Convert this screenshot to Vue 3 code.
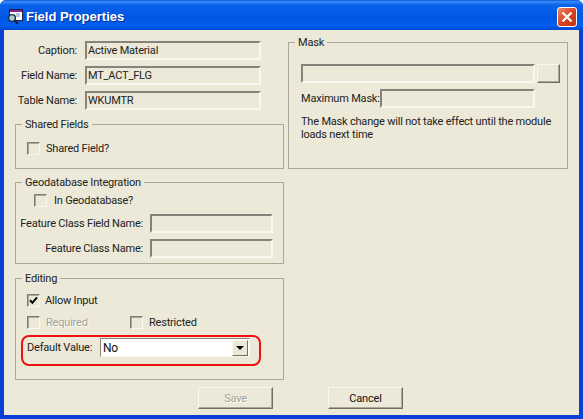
<template>
  <div class="window">
    <div class="titlebar">
      <svg class="app-icon" width="16" height="16" viewBox="0 0 16 16">
        <rect x="2.5" y="0.5" width="13" height="11" fill="#fff" stroke="#20204a" />
        <rect x="3" y="1" width="12" height="2" fill="#8a1f8f" />
        <path d="M9 5h4M9 7h4" stroke="#7a86c0" />
        <circle cx="5" cy="9" r="3.4" fill="#a9cfd6" stroke="#16324a" stroke-width="1.4" />
        <path d="M7.5 11.5L11 15" stroke="#14233a" stroke-width="2" />
      </svg>
      <span class="title">Field Properties</span>
      <button class="close">
        <svg width="12" height="12" viewBox="0 0 12 12">
          <path d="M1.5 1.5L10.5 10.5M10.5 1.5L1.5 10.5" stroke="#fff" stroke-width="2.4" />
        </svg>
      </button>
    </div>

    <div class="body">
      <div class="columns">
        <div class="left">
          <div class="info-rows">
            <div v-for="row in infoRows" :key="row.label" class="info-row">
              <label>{{ row.label }}</label>
              <div class="sunken">{{ row.value }}</div>
            </div>
          </div>

          <div class="group shared">
            <div class="legend">Shared Fields</div>
            <div class="check-row">
              <span class="check"></span>
              <span class="gap6">Shared Field?</span>
            </div>
          </div>

          <div class="group geo">
            <div class="legend">Geodatabase Integration</div>
            <div class="check-row indent">
              <span class="check"></span>
              <span class="gap7">In Geodatabase?</span>
            </div>
            <div class="feature-row first">
              <label>Feature Class Field Name:</label>
              <div class="sunken"></div>
            </div>
            <div class="feature-row">
              <label>Feature Class Name:</label>
              <div class="sunken"></div>
            </div>
          </div>

          <div class="group editing">
            <div class="legend">Editing</div>
            <div class="check-row">
              <span class="check">
                <svg width="9" height="9" viewBox="0 0 9 9">
                  <path d="M1 4.2L3.4 6.8L8 1.4" fill="none" stroke="#000" stroke-width="2" />
                </svg>
              </span>
              <span class="gap5">Allow Input</span>
            </div>
            <div class="check-row pair">
              <div class="check-item required">
                <span class="check"></span>
                <span class="gap6 muted">Required</span>
              </div>
              <div class="check-item">
                <span class="check"></span>
                <span class="gap6">Restricted</span>
              </div>
            </div>
            <div class="default-row">
              <label>Default Value:</label>
              <div class="combo">
                <span class="combo-value">No</span>
                <span class="combo-btn"><i></i></span>
              </div>
            </div>
          </div>
        </div>

        <div class="group mask">
          <div class="legend">Mask</div>
          <div class="mask-row">
            <div class="sunken mask-input"></div>
            <button class="raised browse"></button>
          </div>
          <div class="max-row">
            <label>Maximum Mask:</label>
            <div class="sunken"></div>
          </div>
          <p>The Mask change will not take effect until the module loads next time</p>
        </div>
      </div>

      <div class="footer">
        <button class="raised action muted">Save</button>
        <button class="raised action">Cancel</button>
      </div>
    </div>
  </div>
</template>

<script setup>
const infoRows = [
  { label: "Caption:", value: "Active Material" },
  { label: "Field Name:", value: "MT_ACT_FLG" },
  { label: "Table Name:", value: "WKUMTR" },
];
</script>

<style>
html,
body {
  margin: 0;
  background: #fff;
  overflow: hidden;
}
</style>

<style scoped>
.window {
  width: 583px;
  height: 419px;
  box-sizing: border-box;
  display: flex;
  flex-direction: column;
  background: #0a3fd8;
  border-radius: 6px 6px 0 0;
  padding: 0 4px 4px;
  font-family: Roboto, "Liberation Sans", Arial, sans-serif;
  font-size: 11px;
  letter-spacing: -0.2px;
  color: #222;
}

.titlebar {
  height: 30px;
  flex: none;
  margin: 0 -4px;
  padding: 0 6px 0 7px;
  display: flex;
  align-items: center;
  border-radius: 6px 6px 0 0;
  background: linear-gradient(180deg, #0a56d8 0, #3a8cf6 6%, #0a62ea 16%, #0056e4 60%, #0260ee 85%, #0148d0 100%);
}

.app-icon {
  margin-top: 3px;
}

.title {
  margin-left: 3px;
  margin-top: 3px;
  color: #fff;
  font-family: "Liberation Sans", Arial, sans-serif;
  font-size: 13px;
  font-weight: bold;
  letter-spacing: 0;
  text-shadow: 1px 1px 0 #0a2f9a;
}

.close {
  margin-left: auto;
  margin-top: 4px;
  width: 20px;
  height: 20px;
  padding: 0;
  display: grid;
  place-items: center;
  border: 1px solid #fff;
  border-radius: 3px;
  background: linear-gradient(135deg, #ec8a6c, #d6401c 55%, #c2360f);
}

.body {
  flex: 1;
  background: #ece9d8;
  padding: 11px 11px 0;
}

.columns {
  display: flex;
  gap: 4px;
  align-items: flex-start;
}

.left {
  width: 269px;
  display: flex;
  flex-direction: column;
}

label {
  white-space: nowrap;
}

.sunken {
  box-sizing: border-box;
  height: 19px;
  border: 2px solid;
  border-color: #86847a #f8f7f0 #f8f7f0 #86847a;
  background: #ece9d8;
  line-height: 16px;
  padding-left: 1px;
}

.info-rows {
  display: flex;
  flex-direction: column;
  gap: 6px;
}

.info-row {
  display: flex;
  align-items: center;
}

.info-row label {
  width: 62px;
  margin-right: 8px;
  text-align: right;
}

.info-row .sunken {
  width: 176px;
}

.group {
  position: relative;
  box-sizing: border-box;
  border: 1px solid #aaa89b;
}

.legend {
  position: absolute;
  top: -7px;
  left: 6px;
  padding: 0 3px;
  background: #ece9d8;
  line-height: 13px;
}

.shared {
  height: 45px;
  margin-top: 14px;
  padding: 17px 0 0 11px;
}

.geo {
  height: 82px;
  margin-top: 13px;
  padding: 11px 0 0 0;
}

.editing {
  height: 102px;
  margin-top: 14px;
  padding: 15px 0 0 11px;
}

.check-row,
.check-item {
  display: flex;
  align-items: center;
  height: 13px;
  line-height: 13px;
}

.check {
  box-sizing: border-box;
  flex: none;
  width: 13px;
  height: 13px;
  display: grid;
  place-items: center;
  border: 1px solid;
  border-color: #7f7d72 #f8f7f0 #f8f7f0 #7f7d72;
  box-shadow: inset 1px 1px 0 #aaa89b;
  background: #ece9d8;
}

.gap5 {
  margin-left: 5px;
}

.gap6 {
  margin-left: 6px;
}

.gap7 {
  margin-left: 7px;
}

.indent {
  margin-left: 18px;
}

.feature-row {
  display: flex;
  align-items: center;
  margin-top: 6px;
}

.feature-row.first {
  margin-top: 7px;
}

.feature-row label {
  width: 127px;
  margin-right: 7px;
  text-align: right;
}

.feature-row .sunken {
  width: 123px;
}

.pair {
  margin-top: 9px;
}

.required {
  width: 103px;
}

.default-row {
  position: relative;
  display: flex;
  align-items: center;
  margin-top: 9px;
}

.default-row::after {
  content: "";
  position: absolute;
  left: -6px;
  top: -3px;
  width: 240px;
  height: 31px;
  box-sizing: border-box;
  border: 2px solid #ee1111;
  border-radius: 8px;
  pointer-events: none;
}

.default-row label {
  width: 73px;
}

.combo {
  box-sizing: border-box;
  width: 150px;
  height: 19px;
  display: flex;
  align-items: center;
  justify-content: space-between;
  padding-right: 1px;
  border: 1px solid;
  border-color: #86847a #f8f7f0 #f8f7f0 #86847a;
  background: #fff;
}

.combo-value {
  padding-left: 2px;
  font-size: 12px;
  color: #111;
}

.combo-btn {
  box-sizing: border-box;
  width: 16px;
  height: 16px;
  display: grid;
  place-items: center;
  background: #ece9d8;
  border: 1px solid;
  border-color: #f8f7f0 #716f64 #716f64 #f8f7f0;
}

.combo-btn i {
  width: 0;
  height: 0;
  border-left: 4px solid transparent;
  border-right: 4px solid transparent;
  border-top: 4px solid #000;
}

.mask {
  width: 280px;
  height: 127px;
  margin-top: 1px;
  padding: 21px 0 0 12px;
}

.mask-row {
  display: flex;
  gap: 2px;
}

.mask-input {
  width: 234px;
}

.raised {
  box-sizing: border-box;
  padding: 0;
  background: #ece9d8;
  border: 1px solid;
  border-color: #f8f7f0 #716f64 #716f64 #f8f7f0;
  box-shadow: inset -1px -1px 0 #aca899;
  font: inherit;
  letter-spacing: inherit;
  color: #111;
}

.browse {
  width: 23px;
  height: 19px;
}

.max-row {
  display: flex;
  align-items: center;
  margin-top: 6px;
}

.max-row label {
  width: 79px;
}

.max-row .sunken {
  width: 155px;
}

.mask p {
  margin: 7px 0 0;
  width: 262px;
  line-height: 13px;
}

.footer {
  display: flex;
  gap: 55px;
  margin-top: 7px;
  padding-left: 183px;
}

.action {
  width: 75px;
  height: 22px;
}

.muted {
  color: #a3a196;
  text-shadow: 1px 1px 0 #fff;
}
</style>
